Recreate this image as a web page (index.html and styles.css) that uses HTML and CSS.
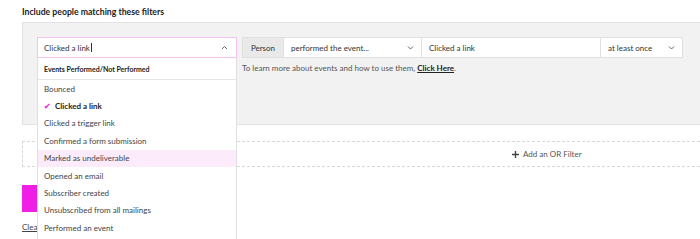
FILE: index.html
```html
<!DOCTYPE html>
<html>
<head>
<meta charset="utf-8">
<link rel="stylesheet" href="styles.css">
</head>
<body>
<div class="page">
  <div class="title">Include people matching these filters</div>
  <div class="panel">
    <div class="combo">
      <div class="combo-input">
        <span class="combo-text">Clicked a link<span class="cursor"></span></span>
        <svg class="chev" width="7" height="5" viewBox="0 0 7 5"><path d="M1 4 L3.5 1.5 L6 4" fill="none" stroke="#666" stroke-width="1"/></svg>
      </div>
      <div class="menu">
        <div class="menu-head">Events Performed/Not Performed</div>
        <div class="item">Bounced</div>
        <div class="item selected"><span class="check">✔</span>Clicked a link</div>
        <div class="item">Clicked a trigger link</div>
        <div class="item">Confirmed a form submission</div>
        <div class="item hover">Marked as undeliverable</div>
        <div class="item">Opened an email</div>
        <div class="item">Subscriber created</div>
        <div class="item">Unsubscribed from all mailings</div>
        <div class="item">Performed an event</div>
      </div>
    </div>
    <div class="rule">
      <div class="fields">
        <div class="field person">Person</div>
        <div class="field select event">performed the event...<svg class="chev" width="7" height="5" viewBox="0 0 7 5"><path d="M1 1.5 L3.5 4 L6 1.5" fill="none" stroke="#666" stroke-width="1"/></svg></div>
        <div class="field input">Clicked a link</div>
        <div class="field select freq">at least once<svg class="chev" width="7" height="5" viewBox="0 0 7 5"><path d="M1 1.5 L3.5 4 L6 1.5" fill="none" stroke="#666" stroke-width="1"/></svg></div>
      </div>
      <div class="help">To learn more about events and how to use them, <a class="link">Click Here</a>.</div>
    </div>
  </div>
  <div class="orbox"><svg class="plus" width="7" height="7" viewBox="0 0 7 7"><path d="M3.5 0 V7 M0 3.5 H7" stroke="#444" stroke-width="1.4"/></svg>Add an OR Filter</div>
  <div class="save"></div>
  <a class="clear">Clear</a>
</div>
</body>
</html>
```

FILE: styles.css
```css
html {
  height: 100%;
}
body {
  margin: 0;
  padding: 0;
  height: 100%;
  overflow: hidden;
  background: #fff;
  font-family: "Lato", "Noto Sans", sans-serif;
  font-size: 8px;
  color: #333;
}
.page {
  padding: 7px 0 0 22px;
}
.title {
  font-weight: 700;
  font-size: 8.7px;
  color: #222;
  height: 10px;
  line-height: 10px;
}
.panel {
  margin-top: 5px;
  height: 72px;
  background: #f2f2f2;
  border: 1px solid #e2e2e2;
  border-right: none;
  padding: 14px 0 15px 14px;
  display: flex;
  gap: 5px;
}
.combo {
  position: relative;
  width: 200px;
}
.combo-input {
  height: 19px;
  border: 1px solid #f3c4f0;
  background: #fff;
  display: flex;
  align-items: center;
  justify-content: space-between;
  padding: 0 8px 0 6px;
  color: #333;
}
.combo-text {
  display: flex;
  align-items: center;
}
.cursor {
  display: inline-block;
  width: 1px;
  height: 9px;
  background: #333;
  margin-left: 1px;
}
.menu {
  position: absolute;
  top: 21px;
  left: 0;
  width: 198px;
  background: #fff;
  border: 1px solid #e0e0e0;
  border-top: none;
  padding-bottom: 12px;
  z-index: 2;
}
.menu-head {
  height: 21px;
  border-bottom: 1px solid #e6e6e6;
  font-weight: 700;
  font-size: 7px;
  color: #222;
  display: flex;
  align-items: center;
  padding-left: 6px;
}
.item {
  height: 17.4px;
  display: flex;
  align-items: center;
  padding-left: 6px;
  color: #444;
}
.item.selected {
  font-weight: 700;
  color: #222;
}
.check {
  color: #e83ad9;
  font-size: 8px;
  margin-right: 4px;
}
.item.hover {
  background: #fcecfb;
}
.rule {
  display: flex;
  flex-direction: column;
}
.fields {
  display: flex;
  height: 21px;
}
.field {
  box-sizing: border-box;
  height: 21px;
  border: 1px solid #e0e0e0;
  background: #fff;
  display: flex;
  align-items: center;
  padding: 0 7px;
  color: #333;
  margin-left: -1px;
}
.field:first-child {
  margin-left: 0;
}
.person {
  width: 42px;
  background: #e9e9e9;
  justify-content: center;
  padding: 0;
}
.select {
  justify-content: space-between;
}
.event {
  width: 139px;
}
.input {
  width: 180px;
}
.freq {
  width: 83px;
}
.help {
  margin-top: 5px;
  line-height: 10px;
  color: #555;
}
.link {
  color: #222;
  font-weight: 700;
  text-decoration: underline;
}
.orbox {
  margin-top: 16px;
  height: 24px;
  border: 1px dashed #d8d8d8;
  border-right: none;
  display: flex;
  align-items: center;
  padding-left: 489px;
  color: #555;
}
.plus {
  margin-right: 4px;
}
.save {
  margin-top: 18px;
  width: 80px;
  height: 27px;
  background: #f01fe6;
}
.clear {
  display: block;
  width: 30px;
  margin-top: 10px;
  color: #444;
  text-decoration: underline;
  line-height: 10px;
}
```
